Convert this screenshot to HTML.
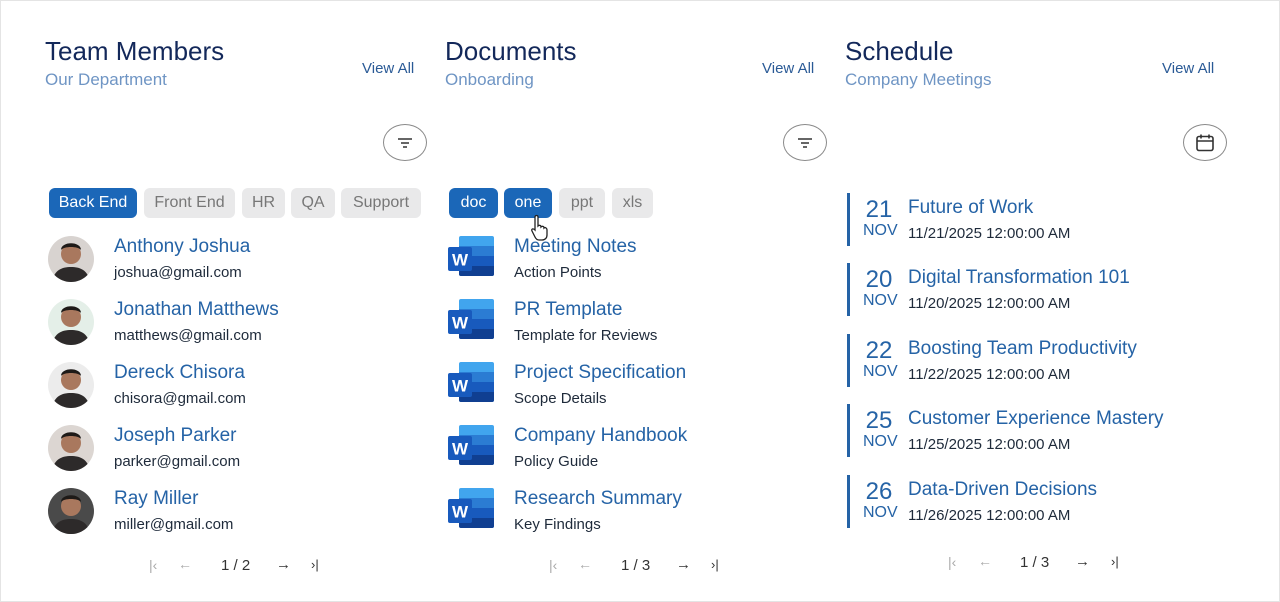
<!DOCTYPE html>
<html><head><meta charset="utf-8"><style>
*{margin:0;padding:0;box-sizing:border-box}
body{width:1280px;height:602px;background:#fff;font-family:"Liberation Sans",sans-serif;position:relative;overflow:hidden;border:1px solid #e4e4e4}
.a{position:absolute;white-space:nowrap}
.t{font-size:26px;color:#13285a}
.s{font-size:17px;color:#6f95c4}
.v{font-size:15px;color:#2a5a96}
.fb{position:absolute;width:44px;height:37px;border:1.5px solid #8a8a8a;border-radius:50%;display:flex;align-items:center;justify-content:center}
.chip{position:absolute;top:187px;height:30px;border-radius:6px;font-size:16px;line-height:30px;text-align:center;background:#e9e9ea;color:#777}
.chip.on{background:#1b67b8;color:#fff}
.nm{font-size:19px;color:#2563a6}
.sub{font-size:15px;color:#1e2a3a}
.av{position:absolute;width:46px;height:46px;border-radius:50%;overflow:hidden;background:#ddd}
.pg{font-size:15px;color:#333}
.pgi{font-size:14px;color:#aaa}
.bar{position:absolute;left:846px;width:3px;height:53px;background:#2563a6}
.day{font-size:24px;color:#2563a6;width:30px;text-align:center}
.mon{font-size:16px;color:#2563a6}
</style></head><body>

<div class="a t" style="left:44px;top:35px">Team Members</div>
<div class="a s" style="left:44px;top:69px">Our Department</div>
<div class="a v" style="left:361px;top:59px">View All</div>
<div class="a t" style="left:444px;top:35px">Documents</div>
<div class="a s" style="left:444px;top:69px">Onboarding</div>
<div class="a v" style="left:761px;top:59px">View All</div>
<div class="a t" style="left:844px;top:35px">Schedule</div>
<div class="a s" style="left:844px;top:69px">Company Meetings</div>
<div class="a v" style="left:1161px;top:59px">View All</div>

<div class="fb" style="left:382px;top:123px"><svg width="16" height="12"><path d="M1 2h14M4 6h8M6 10h4" stroke="#333" stroke-width="1.5"/></svg></div>
<div class="fb" style="left:782px;top:123px"><svg width="16" height="12"><path d="M1 2h14M4 6h8M6 10h4" stroke="#333" stroke-width="1.5"/></svg></div>
<div class="fb" style="left:1182px;top:123px"><svg width="20" height="20"><rect x="2" y="3.5" width="16" height="14" rx="2" fill="none" stroke="#333" stroke-width="1.6"/><path d="M2 8h16M6 1.5v4M14 1.5v4" stroke="#333" stroke-width="1.6"/></svg></div>

<div class="chip on" style="left:48px;width:88px">Back End</div>
<div class="chip" style="left:143px;width:91px">Front End</div>
<div class="chip" style="left:241px;width:43px">HR</div>
<div class="chip" style="left:290px;width:44px">QA</div>
<div class="chip" style="left:340px;width:80px">Support</div>

<div class="chip on" style="left:448px;width:49px">doc</div>
<div class="chip on" style="left:503px;width:48px">one</div>
<div class="chip" style="left:558px;width:46px">ppt</div>
<div class="chip" style="left:611px;width:41px">xls</div>
<svg class="a" style="left:528px;top:213px" width="24" height="28"><path d="M6 3c0-2 3-2 3 0v9c1-1 3-1 3 1 1-1 3-1 3 1 1-1 3 0 3 2v5c0 3-2 5-5 5h-3c-2 0-3-1-4-3l-3-6c-1-2 1-3 3-1V3z" fill="#fff" stroke="#222" stroke-width="1.3"/></svg>

<svg width="0" height="0" style="position:absolute"><defs>
<g id="p"><circle cx="23" cy="18" r="10" fill="#a9785e"/><path d="M13 14c0-9 20-9 20 0c-3-4-17-4-20 0z" fill="#1e1a18"/><path d="M4 46c2-12 10-15 19-15s17 3 19 15z" fill="#2d2a2a"/></g>
</defs></svg>
<div class="av" style="left:47px;top:235px;background:#d8d3d0"><svg width="46" height="46"><use href="#p"/></svg></div>
<div class="a nm" style="left:113px;top:235px">Anthony Joshua</div>
<div class="a sub" style="left:113px;top:263px">joshua@gmail.com</div>
<div class="av" style="left:47px;top:298px;background:#e4efe8"><svg width="46" height="46"><use href="#p"/></svg></div>
<div class="a nm" style="left:113px;top:298px">Jonathan Matthews</div>
<div class="a sub" style="left:113px;top:326px">matthews@gmail.com</div>
<div class="av" style="left:47px;top:361px;background:#ececec"><svg width="46" height="46"><use href="#p"/></svg></div>
<div class="a nm" style="left:113px;top:361px">Dereck Chisora</div>
<div class="a sub" style="left:113px;top:389px">chisora@gmail.com</div>
<div class="av" style="left:47px;top:424px;background:#dcd6d2"><svg width="46" height="46"><use href="#p"/></svg></div>
<div class="a nm" style="left:113px;top:424px">Joseph Parker</div>
<div class="a sub" style="left:113px;top:452px">parker@gmail.com</div>
<div class="av" style="left:47px;top:487px;background:#4a4a4a"><svg width="46" height="46"><use href="#p"/></svg></div>
<div class="a nm" style="left:113px;top:487px">Ray Miller</div>
<div class="a sub" style="left:113px;top:515px">miller@gmail.com</div>

<svg width="0" height="0" style="position:absolute"><defs><g id="w"><rect x="11" y="0" width="35" height="40" rx="2" fill="#41a5ee"/><rect x="11" y="10" width="35" height="10" fill="#2b7cd3"/><rect x="11" y="20" width="35" height="10" fill="#185abd"/><path d="M11 30h35v8a2 2 0 0 1-2 2H13a2 2 0 0 1-2-2z" fill="#103f91"/><rect x="0" y="11" width="24" height="24" rx="2" fill="#185abd"/><text x="12" y="29.5" font-family="Liberation Sans" font-weight="bold" font-size="17" fill="#fff" text-anchor="middle">W</text></g></defs></svg>
<svg class="a" style="left:447px;top:235px" width="47" height="41"><use href="#w"/></svg>
<div class="a nm" style="left:513px;top:235px">Meeting Notes</div>
<div class="a sub" style="left:513px;top:263px">Action Points</div>
<svg class="a" style="left:447px;top:298px" width="47" height="41"><use href="#w"/></svg>
<div class="a nm" style="left:513px;top:298px">PR Template</div>
<div class="a sub" style="left:513px;top:326px">Template for Reviews</div>
<svg class="a" style="left:447px;top:361px" width="47" height="41"><use href="#w"/></svg>
<div class="a nm" style="left:513px;top:361px">Project Specification</div>
<div class="a sub" style="left:513px;top:389px">Scope Details</div>
<svg class="a" style="left:447px;top:424px" width="47" height="41"><use href="#w"/></svg>
<div class="a nm" style="left:513px;top:424px">Company Handbook</div>
<div class="a sub" style="left:513px;top:452px">Policy Guide</div>
<svg class="a" style="left:447px;top:487px" width="47" height="41"><use href="#w"/></svg>
<div class="a nm" style="left:513px;top:487px">Research Summary</div>
<div class="a sub" style="left:513px;top:515px">Key Findings</div>

<div class="bar" style="top:192px"></div><div class="a day" style="left:863px;top:195px">21</div><div class="a mon" style="left:862px;top:221px">NOV</div>
<div class="a nm" style="left:907px;top:196px">Future of Work</div><div class="a sub" style="left:907px;top:224px">11/21/2025 12:00:00 AM</div>
<div class="bar" style="top:262px"></div><div class="a day" style="left:863px;top:265px">20</div><div class="a mon" style="left:862px;top:291px">NOV</div>
<div class="a nm" style="left:907px;top:266px">Digital Transformation 101</div><div class="a sub" style="left:907px;top:294px">11/20/2025 12:00:00 AM</div>
<div class="bar" style="top:333px"></div><div class="a day" style="left:863px;top:336px">22</div><div class="a mon" style="left:862px;top:362px">NOV</div>
<div class="a nm" style="left:907px;top:337px">Boosting Team Productivity</div><div class="a sub" style="left:907px;top:365px">11/22/2025 12:00:00 AM</div>
<div class="bar" style="top:403px"></div><div class="a day" style="left:863px;top:406px">25</div><div class="a mon" style="left:862px;top:432px">NOV</div>
<div class="a nm" style="left:907px;top:407px">Customer Experience Mastery</div><div class="a sub" style="left:907px;top:435px">11/25/2025 12:00:00 AM</div>
<div class="bar" style="top:474px"></div><div class="a day" style="left:863px;top:477px">26</div><div class="a mon" style="left:862px;top:503px">NOV</div>
<div class="a nm" style="left:907px;top:478px">Data-Driven Decisions</div><div class="a sub" style="left:907px;top:506px">11/26/2025 12:00:00 AM</div>

<div class="a pgi" style="left:148px;top:556px">|&lsaquo;</div><div class="a pgi" style="left:177px;top:555px">&larr;</div>
<div class="a pg" style="left:220px;top:556px">1 / 2</div>
<div class="a pg" style="left:275px;top:555px">&rarr;</div><div class="a pg" style="left:310px;top:556px;font-size:13px">&rsaquo;|</div>
<div class="a pgi" style="left:548px;top:556px">|&lsaquo;</div><div class="a pgi" style="left:577px;top:555px">&larr;</div>
<div class="a pg" style="left:620px;top:556px">1 / 3</div>
<div class="a pg" style="left:675px;top:555px">&rarr;</div><div class="a pg" style="left:710px;top:556px;font-size:13px">&rsaquo;|</div>
<div class="a pgi" style="left:947px;top:553px">|&lsaquo;</div><div class="a pgi" style="left:977px;top:552px">&larr;</div>
<div class="a pg" style="left:1019px;top:553px">1 / 3</div>
<div class="a pg" style="left:1074px;top:552px">&rarr;</div><div class="a pg" style="left:1110px;top:553px;font-size:13px">&rsaquo;|</div>
</body></html>
